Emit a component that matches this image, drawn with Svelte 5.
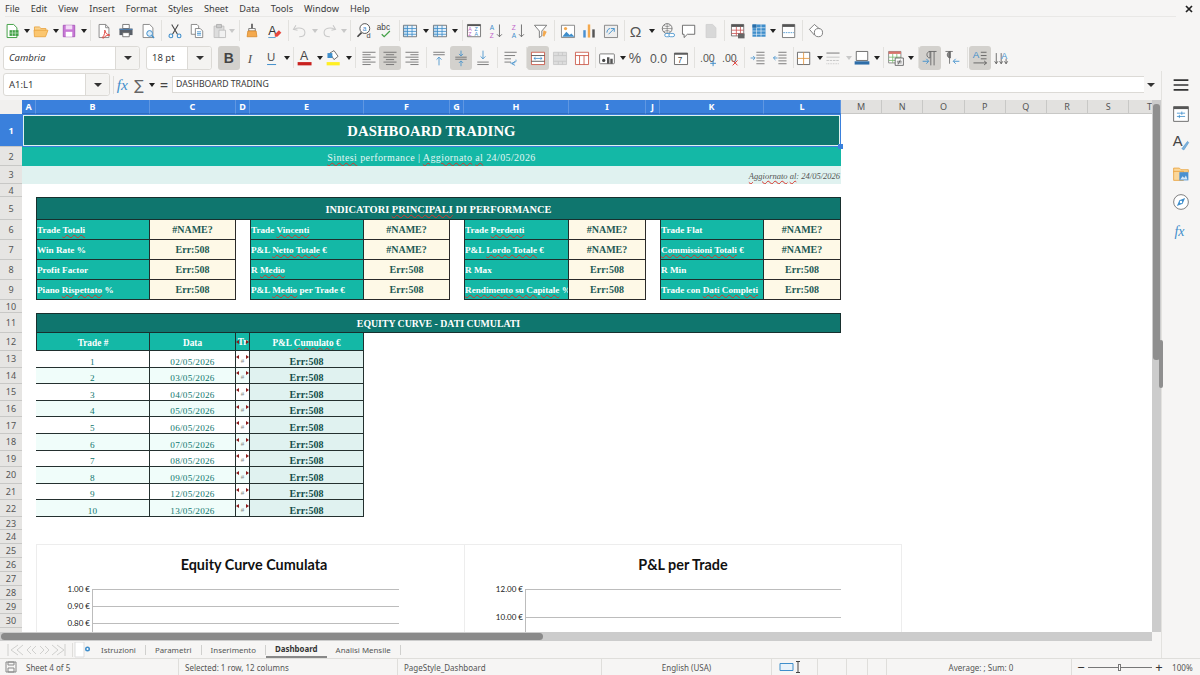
<script>
  const menu = ['File','Edit','View','Insert','Format','Styles','Sheet','Data','Tools','Window','Help'];
  const T = (x,y,s,f,t,extra='') => `<text x="${x}" y="${y}" font-size="${s}" fill="${f}" font-family="Liberation Sans" ${extra}>${t}</text>`;
  const lines = (xs,ys,c,w=1) => ys.map((y,i)=>`<path d="M${xs[0]} ${y}H${Array.isArray(xs[1])?xs[1][i]:xs[1]}" stroke="${c}" stroke-width="${w}"/>`).join('');
  const icons = {
    new:`<path d="M5 3h8l4 4v12H5z" fill="#fff" stroke="#43a047" stroke-width="1.2"/><path d="M8 10h11v7H8z" fill="#43a047"/><path d="M11.500 10v7M15 10v7M8 13.500h11" stroke="#d7f0d8" stroke-width=".8"/>`,
    open:`<path d="M3 6h6l2 2h6v3H3z" fill="#f9d38f" stroke="#e9a23b"/><path d="M2.500 10h17l-3 8H3z" fill="#fbc66f" stroke="#e9a23b"/>`,
    save:`<path d="M4 4h14v14H4z" fill="#c879d6" stroke="#a34fb5"/><path d="M7 4h8v5H7z" fill="#f3dcf7"/><path d="M7 12h8v6H7z" fill="#fff"/>`,
    pdf:`<path d="M5 3h8l4 4v12H5z" fill="#fff" stroke="#777"/><path d="M13 3v4h4" fill="none" stroke="#777"/><path d="M9 19c3-3 3-7 3-9 1 4 2 5 6 6-3 0-6 1-8 4z" fill="none" stroke="#e0413a" stroke-width="1.2"/>`,
    print:`<path d="M7 3h8v5H7z" fill="#fff" stroke="#666"/><path d="M3 8h16v8H3z" fill="#5a6068"/><path d="M7 13h8v5H7z" fill="#fff" stroke="#666"/><path d="M3 9h16" stroke="#4a88c4"/>`,
    prev:`<path d="M5 3h8l4 4v12H5z" fill="#fff" stroke="#777"/><circle cx="13" cy="14" r="3.500" fill="#dcecf8" stroke="#3f8ecb" stroke-width="1.200"/><path d="M15.500 16.500l3 3" stroke="#3f8ecb" stroke-width="1.500"/>`,
    cut:`<path d="M7 3l7 12M15 3L8 15" stroke="#444" stroke-width="1.300"/><circle cx="6" cy="17" r="2.300" fill="none" stroke="#3f8ecb" stroke-width="1.300"/><circle cx="16" cy="17" r="2.300" fill="none" stroke="#3f8ecb" stroke-width="1.300"/>`,
    copy:`<path d="M4 3h7l2 2v10H4z" fill="#fff" stroke="#777"/><path d="M9 8h6l3 3v8H9z" fill="#fff" stroke="#777"/>${lines([11,16],[12,14,16],'#3f8ecb')}`,
    paste:`<path d="M5 5h12v14H5z" fill="#ddd" stroke="#bbb"/><path d="M8 3h6v4H8z" fill="#ccc" stroke="#aaa"/><path d="M11 10h8v9h-8z" fill="#f1f1f1" stroke="#bbb"/>`,
    clone:`<path d="M10 2h2v6h-2z" fill="#555"/><path d="M7 8h8v3H7z" fill="#fff" stroke="#666"/><path d="M6 11h10l1 7H5z" fill="#f4a94e" stroke="#d98a2c"/>`,
    clear:`${T(4,16,15,'#333','A')}<path d="M12 15l5-5 3 3-5 5h-3z" fill="#e8473f"/><path d="M4 19h9" stroke="#3f8ecb"/>`,
    undo:`<path d="M6 4L3 9l5 1M4 9c5-3 13-2 13 4 0 3-3 5-7 5" fill="none" stroke="#c9c9c9" stroke-width="1.300"/>`,
    redo:`<path d="M16 4l3 5-5 1M18 9c-5-3-13-2-13 4 0 3 3 5 7 5" fill="none" stroke="#c9c9c9" stroke-width="1.300"/>`,
    find:`<circle cx="12" cy="8" r="6" fill="#fff" stroke="#555" stroke-width="1.200"/><path d="M8 13l-5 5" stroke="#444" stroke-width="2"/>${T(9.500,11,8,'#3f8ecb','a')}${T(14,20,9,'#444','d')}`,
    spell:`${T(1,10,10,'#444','abc')}<path d="M7 15l3 3 7-7" fill="none" stroke="#43a047" stroke-width="1.500"/>`,
    tbl:`<path d="M3 4h16v14H3z" fill="#eaf3fb" stroke="#666"/><path d="M3 8h16M3 11.500h16M3 15h16M8 4v14M13.500 4v14" stroke="#3f8ecb"/><path d="M3 4h5v14H3z" fill="#3f8ecb" opacity=".25"/>`,
    sort:`<path d="M3 3h16v15H3z" fill="#fff" stroke="#666"/><path d="M3 3h16v2H3z" fill="#555"/>${T(4,11,6.500,'#c060c8','A')}${T(11.500,11,6.500,'#3f8ecb','Z')}${T(4,17.500,6.500,'#c060c8','Z')}${T(11.500,17.500,6.500,'#3f8ecb','A')}`,
    az:`${T(2,10,8,'#3f8ecb','A')}${T(2,19,8,'#c060c8','Z')}<path d="M14 3v15M11 15l3 3 3-3" fill="none" stroke="#666" stroke-width="1.100"/>`,
    za:`${T(2,10,8,'#c060c8','Z')}${T(2,19,8,'#3f8ecb','A')}<path d="M14 3v15M11 15l3 3 3-3" fill="none" stroke="#666" stroke-width="1.100"/>`,
    filter:`<path d="M3 4h15l-6 7v6l-3 2v-8z" fill="#fff" stroke="#666"/><path d="M14 10l4 2-3 6-2-1z" fill="#f4a94e"/>`,
    img:`<path d="M3 4h16v15H3z" fill="#fff" stroke="#777"/><path d="M4 18l5-6 4 4 2-2 4 4z" fill="#3f8ecb"/><circle cx="8" cy="8" r="2" fill="#f4a94e"/>`,
    chart:`<path d="M4 10h3v9H4z" fill="#4a90d0"/><path d="M9.500 3h3v16h-3z" fill="#f4a94e"/><path d="M15 9h3v10h-3z" fill="#555"/>`,
    pivot:`<path d="M3 4h16v15H3z" fill="#eee" stroke="#777"/><path d="M8 15l7-7M15 8h-4M15 8v4M6 13c0-3 2-5 4-5" fill="none" stroke="#3f8ecb" stroke-width="1.100"/>`,
    omega:`${T(1,18,19,'#555','Ω')}`,
    link:`<circle cx="10" cy="8" r="6" fill="none" stroke="#666"/><path d="M4 8h12M10 2v12M6 4c2 2 6 2 8 0M6 12c2-2 6-2 8 0" fill="none" stroke="#666" stroke-width=".7"/><rect x="7" y="14" width="7" height="4" rx="2" fill="#fff" stroke="#3f8ecb"/><rect x="12" y="14" width="7" height="4" rx="2" fill="#fff" stroke="#3f8ecb"/>`,
    cmt:`<path d="M3 4h15v11H9l-4 4v-4H3z" fill="#fff" stroke="#555"/>`,
    hdrs:`<path d="M5 3h8l4 4v12H5z" fill="#d8d8d8" stroke="#cfcfcf"/>`,
    t1:`<path d="M3 3h15v14H3z" fill="#fff" stroke="#666"/><path d="M3 3h15v3H3z" fill="#555"/><path d="M3 10h15M3 14h15M9 6v11M14 6v11" stroke="#c55"/><path d="M11 14h8v6h-8z" fill="#666"/>`,
    t2:`<path d="M3 3h16v15H3z" fill="#3f8ecb"/><path d="M3 7h16M3 11h16M3 15h16M8 3v15M13.500 3v15" stroke="#fff" stroke-width=".7"/><path d="M3 3h5v4H3z" fill="#2a6ea8"/>`,
    hf:`<path d="M3 3h15v16H3z" fill="#fff" stroke="#666"/><path d="M3 3h15v3H3z" fill="#555"/><path d="M4 13h13" stroke="#3f8ecb" stroke-dasharray="2 1"/>`,
    shapes:`<path d="M9 3l7 6-7 7-6-7z" fill="#fff" stroke="#666"/><circle cx="14" cy="13" r="5" fill="#fff" stroke="#666"/>`,
    italic:`${T(7,17,16,'#555','I','font-style="italic" style="font-family:Liberation Serif"')}`,
    under:`${T(5,15,14,'#555','U')}<path d="M5 19h11" stroke="#3f8ecb" stroke-width="1.200"/>`,
    bold:`${T(4.500,17,17,'#444','B','font-weight="bold"')}`,
    fcolor:`${T(5,14,15,'#444','A')}<path d="M2 16h17v4H2z" fill="#c9211e"/>`,
    bcolor:`<path d="M6 5l5-3 5 7-5 4z" fill="#fff" stroke="#555"/><path d="M3 5h6v6H3z" fill="#3f8ecb"/><path d="M2 16h16v4H2z" fill="#ffef22"/>`,
    al:lines([3,[19,13,19,13,19,13]],[4,7,10,13,16,19],'#666'),
    ac:`<path d="M3 4h16M6 7h10M3 10h16M6 13h10M3 16h16M6 19h10" stroke="#666"/>`,
    ar:`<path d="M3 4h16M9 7h10M3 10h16M9 13h10M3 16h16M9 19h10" stroke="#666"/>`,
    vt:`<path d="M4 4h14M4 7h14" stroke="#666"/><path d="M11 20v-10M8 13l3-3 3 3" fill="none" stroke="#3f8ecb"/>`,
    vm:`<path d="M4 10h14M4 12.500h14" stroke="#666"/><path d="M11 2v6M8.500 6l2.500 2.500L13.500 6M11 21v-6M8.500 17l2.500-2.500 2.500 2.500" fill="none" stroke="#3f8ecb"/>`,
    vb:`<path d="M4 16h14M4 19h14" stroke="#666"/><path d="M11 2v10M8 9l3 3 3-3" fill="none" stroke="#3f8ecb"/>`,
    wrap:`<path d="M3 4h15M3 8h13M3 12h8M3 16h8" stroke="#666"/><path d="M10 17c5 1 8-1 7-4M16 15l-4 3 4 2" fill="none" stroke="#3f8ecb"/>`,
    merge:`<path d="M3 4h16v15H3z" fill="#fff" stroke="#c9503f"/><path d="M3 8h16M3 15h16" stroke="#444"/><path d="M6 11.500h10M6 11.500l2-1.500M6 11.500l2 1.500M16 11.500l-2-1.500M16 11.500l-2 1.500" stroke="#3f8ecb"/>`,
    mg:`<path d="M3 4h16v15H3z" fill="#ddd" stroke="#c6c6c6"/><path d="M3 8h16M3 15h16M9 4v4M14 4v4M9 15v4M14 15v4" stroke="#c6c6c6"/>`,
    mr:`<path d="M3 4h16v15H3z" fill="#fff" stroke="#c9503f"/><path d="M3 8h16M8 8v11M13.500 8v11" stroke="#c9503f"/>`,
    numf:`<rect x="2" y="6" width="18" height="12" rx="1" fill="#fff" stroke="#666"/><circle cx="7" cy="14" r="2" fill="#444"/><path d="M11 10h3v8h-3zM15 12h3v6h-3z" fill="#555"/>`,
    pct:`${T(1,17,17,'#555','%')}`,
    num0:`${T(0,17,15,'#555','0.0')}`,
    date:`<path d="M3 5h16v14H3z" fill="#fff" stroke="#555"/><path d="M3 5h16v2H3z" fill="#555"/>${T(7,17,10,'#444','7')}`,
    dadd:`${T(0,16,13,'#555','.00')}<path d="M16 14v7M12.500 17.500h7" stroke="#3f8ecb" stroke-width="1.200"/>`,
    ddel:`${T(0,16,13,'#555','.00')}<path d="M13 14l6 6M19 14l-6 6" stroke="#e0413a" stroke-width="1.200"/>`,
    ind:`<path d="M9 4h10M9 7.500h10M9 11h10M9 14.500h10M9 18h10" stroke="#666"/><path d="M2 11h5M5 8.500L7.500 11 5 13.500" fill="none" stroke="#3f8ecb"/>`,
    out:`<path d="M9 4h10M9 7.500h10M9 11h10M9 14.500h10M9 18h10" stroke="#666"/><path d="M8 11H3M5.500 8.500L3 11l2.500 2.500" fill="none" stroke="#3f8ecb"/>`,
    bord:`<path d="M3 4h15v15H3z" fill="#fff" stroke="#555"/><path d="M10.500 4v15M3 11.500h15" stroke="#e0923a"/>`,
    bsty:`<path d="M3 5h16" stroke="#aaa" stroke-width="2"/><path d="M3 10h16" stroke="#bbb"/><path d="M3 14h16" stroke="#bbb" stroke-dasharray="3 1"/><path d="M3 18h16" stroke="#bbb" stroke-dasharray="1 1"/>`,
    bcol:`<path d="M4 3h14v11H4z" fill="#fff" stroke="#555"/><path d="M2 15h18v4H2z" fill="#2d6da8"/>`,
    cond:`<path d="M2 3h15v14H2z" fill="#fff" stroke="#777"/><path d="M2 3h15v3H2z" fill="#d9736b"/><path d="M2 10h15M2 14h15M7 6v11M12 6v11" stroke="#7cb86f"/><path d="M10 11h10v9H10z" fill="#fff" stroke="#555"/><path d="M12 15h6M12 17h6M16.500 13l-3 6" stroke="#444" stroke-width=".8"/>`,
    ltr:`<path d="M10 3h9M11 3c-5 0-5 8 0 8zM12 3v17M16 3v17" fill="none" stroke="#666" stroke-width="1.100"/><path d="M2 15h7M6.500 12l3 3-3 3" fill="none" stroke="#3f8ecb" stroke-width="1.100"/>`,
    rtl:`<path d="M3 3h9M9 3c-5 0-5 8 0 8zM8 3v15" fill="#888" stroke="#666"/><path d="M20 15h-7M15.500 12l-3 3 3 3" fill="none" stroke="#3f8ecb" stroke-width="1.100"/>`,
    txh:`${T(2,11,12,'#3f8ecb','A')}<path d="M12 4h7M12 8h7M12 12h7M3 17h16M16 14.500l3 2.500-3 2.500" fill="none" stroke="#555"/>`,
    txv:`<path d="M4 5v13M2 15l2 3 2-3M10 5v13M8 15l2 3 2-3M16 12v6M14 15l2 3 2-3" fill="none" stroke="#555"/>${T(10,12,11,'#3f8ecb','A')}`,
    side:`<path d="M2 5h18M2 11h18M2 17h18" stroke="#333" stroke-width="2"/>`,
    prop:`<path d="M2 2h18v18H2z" fill="#fff" stroke="#555"/><path d="M2 2h18v3H2z" fill="#555"/><path d="M6 10h10M6 14h10" stroke="#3f8ecb"/><path d="M12 8v4M9 12v4" stroke="#3f8ecb"/>`,
    sty:`${T(1,15,18,'#444','A')}<path d="M12 18l7-9 1.500 1.500-6 9z" fill="#7fb2dc" stroke="#3f8ecb" stroke-width=".6"/>`,
    gal:`<path d="M2 5h7l2 2h9v3H2z" fill="#fbd79a" stroke="#e9a23b"/><path d="M2 9h12v11H2z" fill="#fbd79a" stroke="#e9a23b"/><path d="M9 10h11v10H9z" fill="#4a90d0"/><path d="M10 19l3-4 2 2 2-3 2 5z" fill="#d5e7f7"/>`,
    nav:`<circle cx="11" cy="11" r="9" fill="#fff" stroke="#666"/><path d="M16 6l-3 7-7 3 3-7z" fill="#3f8ecb"/><circle cx="11" cy="11" r="1.500" fill="#fff"/>`,
    fx:`${T(3,17,17,'#3f8ecb','fx','font-style="italic" style="font-family:Liberation Serif"')}`
  };
  function build(list, start=0){
    let right=start;
    return list.map(([n,x,on])=>{
      const w = n==='a'||n==='ag' ? 7 : n==='s' ? 1 : 22;
      const ml = x-w/2-right; right = x+w/2;
      return {n,ml,on};
    });
  }
  const row1 = build([['new',12],['a',27],['open',42],['a',57],['save',71],['a',86],['s',93],['pdf',107],['print',129],['prev',151],['s',164],['cut',178],['copy',200],['paste',222],['ag',235],['s',243],['clone',256],['clear',278],['s',292],['undo',304],['ag',319],['redo',334],['ag',349],['s',356],['find',370],['spell',391],['s',405],['tbl',416],['a',432],['tbl',447],['a',462],['s',470],['sort',482],['az',505],['za',527],['filter',549],['s',562],['img',576],['chart',597],['pivot',619],['s',632],['omega',646],['a',660],['link',677],['cmt',698],['hdrs',720],['s',733],['t1',747],['t2',768],['a',782],['hf',799],['s',812],['shapes',826]]);
  const row2 = build([['bold',229,1],['italic',251],['under',272],['a',287],['s',294],['fcolor',306],['a',321],['bcolor',336],['a',351],['s',358],['al',372],['ac',393,1],['ar',415],['s',429],['vt',442],['vm',464,1],['vb',486],['s',500],['wrap',514],['s',529],['merge',541,1],['mg',563],['mr',585],['s',598],['numf',610],['a',626],['pct',641],['num0',663],['date',685],['s',698],['dadd',713],['ddel',735],['s',748],['ind',762],['out',784],['s',797],['bord',808],['a',824],['bsty',838],['ag',854],['bcol',868],['a',883],['s',890],['cond',903],['a',918],['s',926],['ltr',938,1],['rtl',960],['s',975],['txh',988,1],['txv',1010]],212);
  const side = ['side','prop','sty','gal','nav','fx'];

  const cols = ['A','B','C','D','E','F','G','H','I','J','K','L'];
  const more = ['M','N','O','P','Q','R','S','T'];
  const rowNums = Array.from({length:31},(_,i)=>i+1);
  const kpis = [
    [3,[['Trade Totali','#NAME?'],['Win Rate %','Err:508'],['Profit Factor','Err:508'],['Piano Rispettato %','Err:508']]],
    [6,[['Trade Vincenti','#NAME?'],['P&L Netto Totale €','#NAME?'],['R Medio','Err:508'],['P&L Medio per Trade €','Err:508']]],
    [9,[['Trade Perdenti','#NAME?'],['P&L Lordo Totale €','#NAME?'],['R Max','Err:508'],['Rendimento su Capitale %','Err:508']]],
    [12,[['Trade Flat','#NAME?'],['Commissioni Totali €','#NAME?'],['R Min','Err:508'],['Trade con Dati Completi','Err:508']]]
  ];
  const squig = {'Trade Totali':['Trade ','Totali'],'Trade Vincenti':['Trade ','Vincenti'],'Trade Perdenti':['Trade ','Perdenti'],'Piano Rispettato %':['Piano ','Rispettato',' %'],'P&L Netto Totale €':['P&L ','Netto Totale',' €'],'P&L Lordo Totale €':['P&L ','Lordo Totale',' €'],'R Medio':['R ','Medio'],'P&L Medio per Trade €':['P&L ','Medio',' per Trade €'],'Rendimento su Capitale %':['','Rendimento su Capitale',' %'],'Commissioni Totali €':['','Commissioni Totali',' €'],'Trade con Dati Completi':['Trade con ','Dati Completi']};
  const dates = ['02/05/2026','03/05/2026','04/05/2026','05/05/2026','06/05/2026','07/05/2026','08/05/2026','09/05/2026','12/05/2026','13/05/2026'];
  const tabs = ['Istruzioni','Parametri','Inserimento','Dashboard','Analisi Mensile'];
  const status = [['Sheet 4 of 5',179,'first'],['Selected: 1 row, 12 columns',219,'pad'],['PageStyle_Dashboard',204,'pad'],['English (USA)',170,'mid'],['',46,'ins'],['',29,''],['',21,''],['',19,''],['Average: ; Sum: 0',185,'mid avg']];
</script>

{#snippet ico(n)}
  <svg class="ic" viewBox="0 0 22 22" width="18" height="18">{@html icons[n]}</svg>
{/snippet}

{#snippet tool(list)}
  {#each list as it}
    {#if it.n==='a' || it.n==='ag'}
      <span class="arrow" class:gray={it.n==='ag'} style="margin-left:{it.ml}px"></span>
    {:else if it.n==='s'}
      <span class="sep" style="margin-left:{it.ml}px"></span>
    {:else}
      <span class="btn" class:on={it.on} style="margin-left:{it.ml}px">{@render ico(it.n)}</span>
    {/if}
  {/each}
{/snippet}

{#snippet chart(title, labels, step, cls)}
  <div class="panel {cls}">
    <div class="ctitle">{title}</div>
    {#each labels as l}
      <div class="crow" style="height:{step}px"><span class="clabel">{l}</span><span class="cline"></span></div>
    {/each}
  </div>
{/snippet}

<div class="app">
  <div class="menubar">
    <div class="menus">{#each menu as m}<span>{m}</span>{/each}</div>
    <svg class="close" viewBox="0 0 8 8" width="8" height="8"><path d="M1 1l6 6M7 1L1 7" stroke="#222" stroke-width="1.700"/></svg>
  </div>
  <div class="tb one">{@render tool(row1)}</div>
  <div class="tb two">
    <div class="combo fname"><span class="cv it">Cambria</span><span class="drop"><i class="arrow big"></i></span></div>
    <div class="combo fsize"><span class="cv">18 pt</span><span class="drop"><i class="arrow big"></i></span></div>
    {@render tool(row2)}
  </div>

  <div class="body">
    <div class="left">
      <div class="formula">
        <div class="combo namebox"><span class="cv">A1:L1</span><span class="drop"><i class="arrow big"></i></span></div>
        <span class="fsep"></span>
        <svg class="ic fxi" viewBox="0 0 22 22" width="20" height="20">{@html icons.fx}</svg>
        <span class="sigma">∑</span>
        <span class="arrow"></span>
        <span class="eq">=</span>
        <div class="input">DASHBOARD TRADING</div>
        <span class="arrow big last"></span>
      </div>

      <div class="viewport">
        <div class="gridarea">
          <div class="sheet">
            <div class="corner"></div>
            {#each cols as c,i}
              <div class="ch sel" style="grid-area:1/{i+2}">{c}</div>
            {/each}
            {#each more as c,i}
              <div class="ch" style="grid-area:1/{i+14}">{c}</div>
            {/each}
            {#each rowNums as r}
              <div class="rh" class:sel={r===1} style="grid-area:{r+1}/1">{r===31?'':r}</div>
            {/each}

            <div class="c title" style="grid-area:2/2/2/14">DASHBOARD TRADING</div>
            <div class="c sub" style="grid-area:3/2/3/14"><span><u>Sintesi</u> performance | <u>Aggiornato</u> <u>al</u> 24/05/2026</span></div>
            <div class="c upd" style="grid-area:4/2/4/14"><span><u>Aggiornato</u> <u>al</u>: 24/05/2026</span></div>

            <div class="c band" style="grid-area:6/3/6/14"><span>INDICATORI <u>PRINCIPALI</u> DI PERFORMANCE</span></div>
            {#each kpis as [col,rows]}
              {#each rows as [label,val],i}
                <div class="c lab" style="grid-area:{i+7}/{col}">
                  <span class="lt">{#if squig[label]}{squig[label][0]}<u>{squig[label][1]}</u>{squig[label][2]||''}{:else}{label}{/if}</span>
                </div>
                <div class="c kv" style="grid-area:{i+7}/{col+1}">{val}</div>
              {/each}
            {/each}

            <div class="c band b2" style="grid-area:12/3/12/14"><span>EQUITY CURVE - DATI CUMULATI</span></div>
            <div class="c thd fc" style="grid-area:13/3">Trade #</div>
            <div class="c thd" style="grid-area:13/4">Data</div>
            <div class="c thd nar" style="grid-area:13/5">Tr<i class="ov l mid"></i><i class="ov r mid"></i></div>
            <div class="c thd" style="grid-area:13/6"><span>P&amp;L <u>Cumulato</u> €</span></div>
            {#each dates as d,i}
              <div class="c td fc" class:alt={i%2===1} style="grid-area:{i+14}/3">{i+1}</div>
              <div class="c td" class:alt={i%2===1} style="grid-area:{i+14}/4">{d}</div>
              <div class="c td nar" class:alt={i%2===1} style="grid-area:{i+14}/5">#<i class="ov l"></i><i class="ov r"></i></div>
              <div class="c pl" style="grid-area:{i+14}/6">Err:508</div>
            {/each}
          </div>

          <div class="selbox"><i></i></div>
          <div class="charts">
            {@render chart('Equity Curve Cumulata',['1.00 €','0.90 €','0.80 €'],17,'p1')}
            {@render chart('P&L per Trade',['12.00 €','10.00 €'],28.500,'p2')}
          </div>
        </div>
        <div class="vscroll"><span class="vthumb"></span></div>
        <span class="vgrip"></span>
      </div>

      <div class="hscroll"><span class="hthumb"></span></div>

      <div class="tabs">
        <div class="nav">
          <svg viewBox="0 0 60 14" width="60" height="14"><path d="M2 1v12M12 2L5 7l7 5M17 2l-6 5 6 5M25 3l-4 4 4 4M30 3l-4 4 4 4M34 3l4 4-4 4M39 3l4 4-4 4M46 2l6 5-6 5M51 2l7 5-7 5M59 1v12" fill="none" stroke="#d0d0ce" stroke-width="1"/></svg>
        </div>
        <span class="fsep t"></span>
        <div class="addtab">
          <svg viewBox="0 0 18 16" width="18" height="16"><path d="M1 0h9v15H1z" fill="#fff" stroke="#ddd"/><circle cx="13.500" cy="7" r="2.500" fill="#3f8ecb"/><circle cx="13.500" cy="7" r="1" fill="#fff"/></svg>
        </div>
        {#each tabs as t}
          <span class="tab" class:act={t==='Dashboard'}>{t}</span>
          {#if t!=='Dashboard'}<span class="tsep"></span>{/if}
        {/each}
      </div>
    </div>

    <div class="sidebar">
      {#each side as s}
        <span class="sb">{@render ico(s)}</span>
      {/each}
    </div>
  </div>

  <div class="status">
    {#each status as [t,w,k]}
      <div class="st {k}" style="width:{w}px">
        {#if k==='first'}
          <svg viewBox="0 0 12 12" width="12" height="12"><path d="M1 1h10v10H1z" fill="none" stroke="#888"/><path d="M3 1h6v3H3zM3 7h6v4H3z" fill="none" stroke="#888"/></svg>
        {/if}
        {#if k==='ins'}
          <svg viewBox="0 0 30 14" width="30" height="14"><path d="M5 3.500h13v7H5z" fill="#e8f2fa" stroke="#3f8ecb"/><path d="M21 1.500h4M23 1.500v11M21 12.500h4" stroke="#444" fill="none"/></svg>
        {/if}
        {t}
      </div>
    {/each}
    <div class="zoom">
      <span class="zb">−</span>
      <span class="slider"><i></i></span>
      <span class="zb">+</span>
      <span class="pct">100%</span>
    </div>
  </div>
</div>

<style>
  :global(body){margin:0;background:#f6f5f4;}
  .app{width:1200px;height:675px;overflow:hidden;background:#f6f5f4;display:flex;flex-direction:column;font-family:"Noto Sans",sans-serif;color:#3a3a3a;position:relative;}
  .menubar{height:17px;display:flex;align-items:center;justify-content:space-between;padding:0 7px 0 5px;font-size:9.200px;flex:none;box-sizing:border-box;}
  .menus{display:flex;gap:11px;width:1171px;height:17px;align-items:center;border-bottom:1px solid #e9e8e6;box-sizing:border-box;flex:none;}
  .close{display:block;flex:none;}
  .tb{display:flex;align-items:center;flex:none;}
  .one{height:27px;}
  .two{height:27px;padding-left:3px;}
  .ic{display:block;flex:none;}
  .btn{width:22px;height:24px;display:flex;align-items:center;justify-content:center;border-radius:3px;flex:none;}
  .btn.on{background:#d3d1cd;}
  .arrow{display:inline-block;flex:none;width:0;height:0;border-left:3.500px solid transparent;border-right:3.500px solid transparent;border-top:4px solid #222;box-sizing:content-box;}
  .arrow.gray{border-top-color:#c8c8c8;}
  .arrow.big{border-left-width:4.500px;border-right-width:4.500px;border-top-width:4.500px;border-top-color:#333;}
  .sep{width:1px;height:21px;background:#e2e1de;flex:none;}
  .combo{display:flex;height:24px;background:#fff;border:1px solid #dcdad6;border-radius:3px;box-sizing:border-box;font-size:9.500px;flex:none;}
  .cv{flex:1;display:flex;align-items:center;padding-left:5px;}
  .it{font-style:italic;}
  .drop{width:23px;background:#f4f3f1;border-left:1px solid #dcdad6;display:flex;align-items:center;justify-content:center;border-radius:0 3px 3px 0;}
  .fname{width:137px;}
  .fsize{width:66px;margin-left:6px;}
  .body{flex:1;display:flex;min-height:0;}
  .left{width:1161px;display:flex;flex-direction:column;flex:none;}
  .formula{height:29px;display:flex;align-items:center;padding:0 0 2px 3px;box-sizing:border-box;flex:none;}
  .namebox{width:107px;height:23px;}
  .fsep{width:1px;height:18px;background:#dfdedb;margin-left:3px;flex:none;}
  .sigma{font-size:14px;color:#666;margin-left:-2px;width:14px;text-align:center;font-family:"DejaVu Sans",sans-serif;flex:none;}
  .formula>.arrow{margin-left:3px;}
  .eq{font-size:14px;color:#444;margin-left:3px;width:12px;font-weight:600;flex:none;text-align:center;}
  .input{margin-left:2px;width:972px;height:17px;background:#fff;border:1px solid #dcdad6;border-width:1px 0 1px 1px;box-sizing:border-box;font-size:8.700px;line-height:15px;padding-left:3px;flex:none;}
  .formula .last{margin-left:2.500px;}
  .viewport{height:532px;display:flex;flex:none;position:relative;}
  .gridarea{width:1152px;height:532px;overflow:hidden;position:relative;background:#fff;flex:none;}
  .sheet{display:grid;grid-template-columns:22px 14px 114px 86px 14px 114px 86px 14px 105px 77px 14px 104px 77px repeat(8,41.200px);grid-template-rows:14px 33px 19px 18px 13px 23px 20px 20px 20px 20px 13px 20px 18px repeat(10,16.600px) 13.500px repeat(9,14px);width:1172px;font-family:"Liberation Serif",serif;}
  .corner{grid-area:1/1;background:#f1f0ee;}
  .ch{font:9px "Noto Sans",sans-serif;background:#e2e1df;color:#555;text-align:center;line-height:14px;border-right:1px solid #c8c8c6;border-bottom:1px solid #c8c8c6;box-sizing:border-box;}
  .ch.sel{background:#3a80dc;color:#fff;font-weight:700;border-right:1px solid #5f97e2;border-bottom:1px solid #2f6cbd;}
  .rh{font:9px "Noto Sans",sans-serif;background:#e6e5e3;color:#555;display:flex;align-items:center;justify-content:center;border-bottom:1px solid #c8c8c6;box-sizing:border-box;}
  .rh.sel{background:#3a80dc;color:#fff;font-weight:700;}
  .c{display:flex;align-items:center;justify-content:center;overflow:hidden;box-sizing:border-box;position:relative;min-width:0;white-space:nowrap;}
  u{text-decoration:underline wavy #d8342c;text-decoration-thickness:.7px;text-underline-offset:1px;}
  .title{background:#0f766e;color:#fff;font-weight:700;font-size:14.700px;letter-spacing:.1px;padding-top:2px;}
  .sub{background:#14b8a6;color:#e2f7f4;font-size:10px;letter-spacing:.4px;padding-top:2px;}
  .upd{background:#e0f2f0;color:#555;font-size:8.500px;font-style:italic;justify-content:flex-end;padding-right:1px;padding-top:2px;}
  .band{background:#0f766e;color:#fff;font-weight:700;font-size:10.400px;border:1px solid #17302e;padding-top:1px;}
  .b2{font-size:9.800px;}
  .lab{background:#14b8a6;color:#fff;font-weight:700;font-size:9.200px;justify-content:flex-start;padding-left:0;border:1px solid #1f2f2e;border-width:0 1px 1px 1px;}
  .lt{display:block;white-space:nowrap;}
  .kv{background:#fef9e7;color:#1d5a54;font-weight:700;font-size:10px;border:1px solid #2a2a2a;border-width:0 1px 1px 0;}
  .thd{background:#14b8a6;color:#fff;font-weight:700;font-size:9.300px;border:1px solid #1f2f2e;border-width:0 1px 1px 0;padding-top:2px;}
  .fc{border-left-width:1px;}
  .nar{padding:0;}
  .td{background:#fff;color:#0f766e;font-size:9.200px;letter-spacing:.25px;border:1px solid #24302f;border-width:0 1px 1px 0;align-items:flex-end;}
  .td.alt{background:#f0fdfa;}
  .td.nar{color:#888;font-size:7px;padding-bottom:2px;}
  .pl{background:#e0f2f0;color:#134e4a;font-weight:700;font-size:10px;border:1px solid #24302f;border-width:0 1px 1px 0;align-items:flex-end;}
  .ov{position:absolute;top:50%;margin-top:-4px;width:0;height:0;border-top:2.500px solid transparent;border-bottom:2.500px solid transparent;}
  .ov.mid{margin-top:-2px;}
  .ov.l{left:0;border-right:3px solid #8c1c1c;}
  .ov.r{right:0;border-left:3px solid #8c1c1c;}
  .selbox{position:absolute;left:22px;top:14px;width:819px;height:33px;box-sizing:border-box;border:1px solid #3a80dc;outline:1px solid #e0f2f0;outline-offset:-2px;pointer-events:none;}
  .selbox i{position:absolute;right:-3px;bottom:-3px;width:5px;height:5px;background:#3a80dc;}
  .charts{position:absolute;left:36px;top:444px;width:866px;height:88px;display:flex;background:#fff;overflow:hidden;}
  .panel{height:100px;box-sizing:border-box;border:1px solid #ededed;border-bottom:0;background:#fff;flex:none;}
  .p1{width:429px;}
  .p2{width:437px;border-left:0;}
  .p1 .ctitle{padding-left:7px;height:35.500px;}
  .p2 .ctitle{height:29.700px;}
  .ctitle{font:700 14.400px Lato,sans-serif;color:#111;line-height:40px;text-align:center;box-sizing:border-box;}
  .crow{display:flex;align-items:center;position:relative;}
  .p1 .clabel{width:55px;}
  .p2 .clabel{width:60px;}
  .clabel{font:8px Lato,sans-serif;color:#222;text-align:right;padding-right:2px;box-sizing:border-box;flex:none;}
  .cline{height:100%;flex:none;position:relative;}
  .p1 .cline{width:307px;}
  .p2 .cline{width:316px;}
  .cline::after{content:"";position:absolute;left:0;right:0;top:50%;height:1px;background:#bcbcbc;}
  .cline::before{content:"";position:absolute;left:0;top:0;bottom:0;width:1px;background:#bcbcbc;}
  .ctitle + .crow .cline::before{top:50%;}
  .vscroll{width:9px;height:532px;background:#ccc;flex:none;position:relative;}
  .vthumb{position:absolute;left:1px;right:1px;top:4px;height:256px;background:#8f8f8f;border-radius:3px;}
  .vgrip{position:absolute;right:-2px;top:240px;width:4px;height:48px;background:#8f8f8f;border-radius:2px;}
  .hscroll{height:9px;background:#ccc;flex:none;width:1152px;position:relative;}
  .hthumb{position:absolute;left:1px;top:1px;bottom:1px;width:542px;background:#8a8a8a;border-radius:3.500px;}
  .tabs{height:17px;display:flex;align-items:center;font-size:7.900px;color:#555;padding-left:6px;flex:none;}
  .nav{width:60px;height:14px;flex:none;}
  .fsep.t{margin-left:6px;height:14px;}
  .addtab{width:18px;height:16px;margin-left:1px;flex:none;}
  .tab{padding:0 9px;height:17px;display:flex;align-items:center;box-sizing:border-box;flex:none;}
  .tab.act{font-weight:700;color:#333;border-bottom:2px solid #888;padding-top:1px;}
  .tsep{width:1px;height:10px;background:#d0d0ce;flex:none;}
  .sidebar{width:39px;border-left:1px solid #e3e2df;box-sizing:border-box;display:flex;flex-direction:column;align-items:center;padding-top:3px;gap:7.200px;flex:none;}
  .sb{display:flex;height:22px;align-items:center;}
  .status{height:17px;display:flex;align-items:center;border-top:1px solid #dfdedb;font-size:8px;color:#555;box-sizing:border-box;flex:none;}
  .st{height:16px;display:flex;align-items:center;box-sizing:border-box;border-right:1px solid #dfdedb;flex:none;white-space:nowrap;}
  .st.first{padding-left:5px;gap:9px;}
  .st.pad{padding-left:6px;}
  .st.mid{justify-content:center;}
  .st.avg{padding-left:4px;}
  .st.ins{padding-left:3px;}
  .zoom{display:flex;align-items:center;flex:1;padding-left:5px;}
  .zb{font-size:13px;line-height:13px;color:#333;width:8px;text-align:center;}
  .slider{width:64px;height:1px;background:#777;margin:0 3px;position:relative;}
  .slider i{position:absolute;left:30px;top:-3px;width:3px;height:7px;background:#fff;border:1px solid #777;box-sizing:border-box;}
  .pct{margin-left:9px;font-size:8.100px;}
</style>
